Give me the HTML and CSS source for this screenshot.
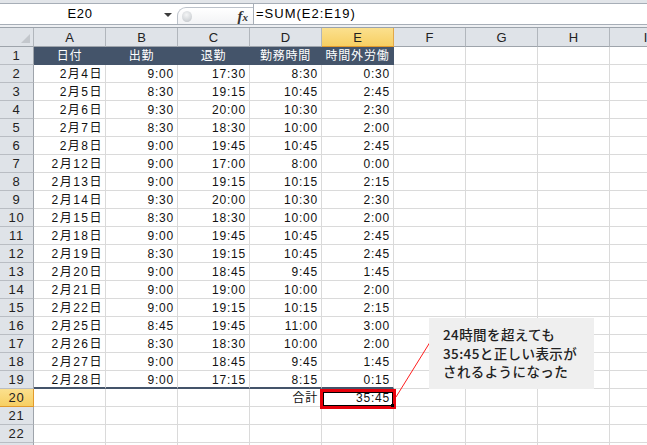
FILE: index.html
```html
<!DOCTYPE html>
<html lang="ja">
<head>
<meta charset="utf-8">
<link rel="stylesheet" href="styles.css">
</head>
<body>
<div class="app">
  <div class="topstrip"></div>
  <div class="fbar">
    <div class="namebox"><span class="name">E20</span><span class="dd"></span></div>
    <div class="fxpill"><span class="knob"></span><span class="fx"><i>f</i><small>x</small></span></div>
    <div class="formula">=SUM(E2:E19)</div>
  </div>
  <div class="fbar-sep"></div>
  <div class="sheet">
    <div class="row colhead">
      <div class="corner"><span class="tri"></span></div>
      <div class="ch">A</div><div class="ch">B</div><div class="ch">C</div><div class="ch">D</div>
      <div class="ch sel">E</div><div class="ch">F</div><div class="ch">G</div><div class="ch">H</div><div class="ch">I</div>
    </div>
    <div class="row"><div class="rh">1</div><div class="c hd">日付</div><div class="c hd">出勤</div><div class="c hd">退勤</div><div class="c hd">勤務時間</div><div class="c hd">時間外労働</div><div class="c"></div><div class="c"></div><div class="c"></div><div class="c"></div></div>
    <div class="row"><div class="rh">2</div><div class="c dt">2月4日</div><div class="c">9:00</div><div class="c">17:30</div><div class="c">8:30</div><div class="c">0:30</div><div class="c"></div><div class="c"></div><div class="c"></div><div class="c"></div></div>
    <div class="row"><div class="rh">3</div><div class="c dt">2月5日</div><div class="c">8:30</div><div class="c">19:15</div><div class="c">10:45</div><div class="c">2:45</div><div class="c"></div><div class="c"></div><div class="c"></div><div class="c"></div></div>
    <div class="row"><div class="rh">4</div><div class="c dt">2月6日</div><div class="c">9:30</div><div class="c">20:00</div><div class="c">10:30</div><div class="c">2:30</div><div class="c"></div><div class="c"></div><div class="c"></div><div class="c"></div></div>
    <div class="row"><div class="rh">5</div><div class="c dt">2月7日</div><div class="c">8:30</div><div class="c">18:30</div><div class="c">10:00</div><div class="c">2:00</div><div class="c"></div><div class="c"></div><div class="c"></div><div class="c"></div></div>
    <div class="row"><div class="rh">6</div><div class="c dt">2月8日</div><div class="c">9:00</div><div class="c">19:45</div><div class="c">10:45</div><div class="c">2:45</div><div class="c"></div><div class="c"></div><div class="c"></div><div class="c"></div></div>
    <div class="row"><div class="rh">7</div><div class="c dt">2月12日</div><div class="c">9:00</div><div class="c">17:00</div><div class="c">8:00</div><div class="c">0:00</div><div class="c"></div><div class="c"></div><div class="c"></div><div class="c"></div></div>
    <div class="row"><div class="rh">8</div><div class="c dt">2月13日</div><div class="c">9:00</div><div class="c">19:15</div><div class="c">10:15</div><div class="c">2:15</div><div class="c"></div><div class="c"></div><div class="c"></div><div class="c"></div></div>
    <div class="row"><div class="rh">9</div><div class="c dt">2月14日</div><div class="c">9:30</div><div class="c">20:00</div><div class="c">10:30</div><div class="c">2:30</div><div class="c"></div><div class="c"></div><div class="c"></div><div class="c"></div></div>
    <div class="row"><div class="rh">10</div><div class="c dt">2月15日</div><div class="c">8:30</div><div class="c">18:30</div><div class="c">10:00</div><div class="c">2:00</div><div class="c"></div><div class="c"></div><div class="c"></div><div class="c"></div></div>
    <div class="row"><div class="rh">11</div><div class="c dt">2月18日</div><div class="c">9:00</div><div class="c">19:45</div><div class="c">10:45</div><div class="c">2:45</div><div class="c"></div><div class="c"></div><div class="c"></div><div class="c"></div></div>
    <div class="row"><div class="rh">12</div><div class="c dt">2月19日</div><div class="c">8:30</div><div class="c">19:15</div><div class="c">10:45</div><div class="c">2:45</div><div class="c"></div><div class="c"></div><div class="c"></div><div class="c"></div></div>
    <div class="row"><div class="rh">13</div><div class="c dt">2月20日</div><div class="c">9:00</div><div class="c">18:45</div><div class="c">9:45</div><div class="c">1:45</div><div class="c"></div><div class="c"></div><div class="c"></div><div class="c"></div></div>
    <div class="row"><div class="rh">14</div><div class="c dt">2月21日</div><div class="c">9:00</div><div class="c">19:00</div><div class="c">10:00</div><div class="c">2:00</div><div class="c"></div><div class="c"></div><div class="c"></div><div class="c"></div></div>
    <div class="row"><div class="rh">15</div><div class="c dt">2月22日</div><div class="c">9:00</div><div class="c">19:15</div><div class="c">10:15</div><div class="c">2:15</div><div class="c"></div><div class="c"></div><div class="c"></div><div class="c"></div></div>
    <div class="row"><div class="rh">16</div><div class="c dt">2月25日</div><div class="c">8:45</div><div class="c">19:45</div><div class="c">11:00</div><div class="c">3:00</div><div class="c"></div><div class="c"></div><div class="c"></div><div class="c"></div></div>
    <div class="row"><div class="rh">17</div><div class="c dt">2月26日</div><div class="c">8:30</div><div class="c">18:30</div><div class="c">10:00</div><div class="c">2:00</div><div class="c"></div><div class="c"></div><div class="c"></div><div class="c"></div></div>
    <div class="row"><div class="rh">18</div><div class="c dt">2月27日</div><div class="c">9:00</div><div class="c">18:45</div><div class="c">9:45</div><div class="c">1:45</div><div class="c"></div><div class="c"></div><div class="c"></div><div class="c"></div></div>
    <div class="row"><div class="rh">19</div><div class="c dt last">2月28日</div><div class="c last">9:00</div><div class="c last">17:15</div><div class="c last">8:15</div><div class="c last">0:15</div><div class="c"></div><div class="c"></div><div class="c"></div><div class="c"></div></div>
    <div class="row"><div class="rh sel">20</div><div class="c"></div><div class="c"></div><div class="c"></div><div class="c">合計</div><div class="c">35:45</div><div class="c"></div><div class="c"></div><div class="c"></div><div class="c"></div></div>
    <div class="row"><div class="rh">21</div><div class="c"></div><div class="c"></div><div class="c"></div><div class="c"></div><div class="c"></div><div class="c"></div><div class="c"></div><div class="c"></div><div class="c"></div></div>
    <div class="row"><div class="rh">22</div><div class="c"></div><div class="c"></div><div class="c"></div><div class="c"></div><div class="c"></div><div class="c"></div><div class="c"></div><div class="c"></div><div class="c"></div></div>
    <div class="row"><div class="rh"></div><div class="c"></div><div class="c"></div><div class="c"></div><div class="c"></div><div class="c"></div><div class="c"></div><div class="c"></div><div class="c"></div><div class="c"></div></div>
  </div>

  <div class="selbox"><span class="handle"></span></div>
  <svg class="leader" width="647" height="445" viewBox="0 0 647 445"><line x1="396" y1="397" x2="429.5" y2="343" stroke="#ff1e1e" stroke-width="1"/></svg>
  <div class="note">24時間を超えても<br>35:45と正しい表示が<br>されるようになった</div>
</div>
</body>
</html>
```

FILE: styles.css
```css
html, body {
  margin: 0;
  padding: 0;
  background: #fff;
  overflow: hidden;
}

.app {
  position: relative;
  width: 647px;
  height: 445px;
  overflow: hidden;
  font-family: "Liberation Sans", "Noto Sans CJK JP", sans-serif;
  color: #000;
}

.topstrip {
  height: 3px;
  background: #e2e5e9;
  border-bottom: 1px solid #a7aeb7;
}

.fbar {
  height: 20px;
  display: flex;
  background: #fff;
}

.namebox {
  width: 177px;
  display: flex;
  align-items: center;
}

.name {
  flex: 1;
  text-align: center;
  font-size: 13px;
  letter-spacing: 0.6px;
  padding-right: 4px;
  line-height: 20px;
}

.dd {
  width: 0;
  height: 0;
  border-left: 4px solid transparent;
  border-right: 4px solid transparent;
  border-top: 4px solid #3c3c3c;
  margin-right: 5px;
  margin-top: 1px;
}

.fxpill {
  align-self: flex-end;
  width: 76px;
  height: 17px;
  box-sizing: border-box;
  border: 1px solid #bcc2ca;
  border-right: none;
  border-bottom: none;
  border-radius: 9px 0 0 0;
  background: linear-gradient(#ffffff, #f2f3f5);
  display: flex;
  align-items: center;
}

.knob {
  width: 10px;
  height: 11px;
  margin-left: 4px;
  border-radius: 50%;
  background: radial-gradient(circle at 45% 35%, #f4f5f6 0, #d7dadd 55%, #b9bdc2 100%);
}

.fx {
  margin-left: auto;
  margin-right: 5px;
  font-family: "Liberation Serif", serif;
  font-weight: bold;
  color: #333;
  font-size: 15px;
  line-height: 14px;
}

.fx i {
  font-style: italic;
}

.fx small {
  font-size: 11px;
  font-style: italic;
}

.formula {
  flex: 1;
  border-left: 1px solid #a7aeb7;
  padding-left: 2px;
  font-size: 13px;
  letter-spacing: 1px;
  line-height: 20px;
}

.fbar-sep {
  height: 4px;
  box-sizing: border-box;
  background: #eef0f3;
  border-top: 1px solid #a7aeb7;
  border-bottom: 1px solid #9ca3ab;
}

.row {
  display: grid;
  grid-template-columns: 34px repeat(9, 72px);
  height: 18px;
}

.row > div {
  box-sizing: border-box;
  overflow: hidden;
  white-space: nowrap;
}

.colhead {
  height: 19px;
}

.corner {
  background: #dfe3e8;
  border-right: 1px solid #b1b6bc;
  border-bottom: 1px solid #9ea4ab;
  position: relative;
}

.tri {
  position: absolute;
  right: 3px;
  bottom: 3px;
  width: 0;
  height: 0;
  border-left: 9px solid transparent;
  border-bottom: 9px solid #c3c7cc;
}

.ch {
  background: #dfe3e8;
  border-right: 1px solid #b1b6bc;
  border-bottom: 1px solid #9ea4ab;
  text-align: center;
  font-size: 13px;
  line-height: 19px;
  color: #222;
}

.ch.sel {
  background: linear-gradient(#fbe08e, #f7cf63);
  border-right-color: #e2a84a;
  border-bottom-color: #e29a2c;
}

.rh {
  background: #dfe3e8;
  border-right: 1px solid #9ea4ab;
  border-bottom: 1px solid #b9bdc3;
  text-align: center;
  font-size: 13px;
  letter-spacing: 0.8px;
  line-height: 18px;
  color: #222;
}

.rh.sel {
  background: linear-gradient(#fbe08e, #f7cf63);
  border-bottom-color: #e29a2c;
  border-right-color: #e29a2c;
}

.c {
  border-right: 1px solid #dadada;
  border-bottom: 1px solid #dadada;
  text-align: right;
  padding-right: 3px;
  font-size: 12px;
  letter-spacing: 0.8px;
  line-height: 18px;
  color: #111;
}

.c.dt {
  letter-spacing: 1.5px;
  padding-right: 2px;
}

.c.hd {
  background: #44546a;
  border-color: #44546a;
  color: #fff;
  text-align: center;
  padding-right: 0;
}

.c.last {
  border-bottom: 2px solid #44546a;
}

.selbox {
  position: absolute;
  left: 320px;
  top: 389px;
  width: 76px;
  height: 20px;
  box-sizing: border-box;
  border: 3px solid #e8000b;
  outline: 1px solid #000;
  outline-offset: -4px;
}

.handle {
  position: absolute;
  right: -1px;
  bottom: -1px;
  width: 3px;
  height: 3px;
  background: #000;
}

.leader {
  position: absolute;
  left: 0;
  top: 0;
  pointer-events: none;
}

.note {
  position: absolute;
  left: 429px;
  top: 318px;
  width: 165px;
  height: 71px;
  box-sizing: border-box;
  background: #efefef;
  padding: 7px 0 0 14px;
  font-family: "Noto Sans CJK JP", sans-serif;
  font-size: 13.5px;
  letter-spacing: 0.4px;
  font-weight: 500;
  line-height: 18.5px;
  color: #222;
  white-space: nowrap;
}
```
